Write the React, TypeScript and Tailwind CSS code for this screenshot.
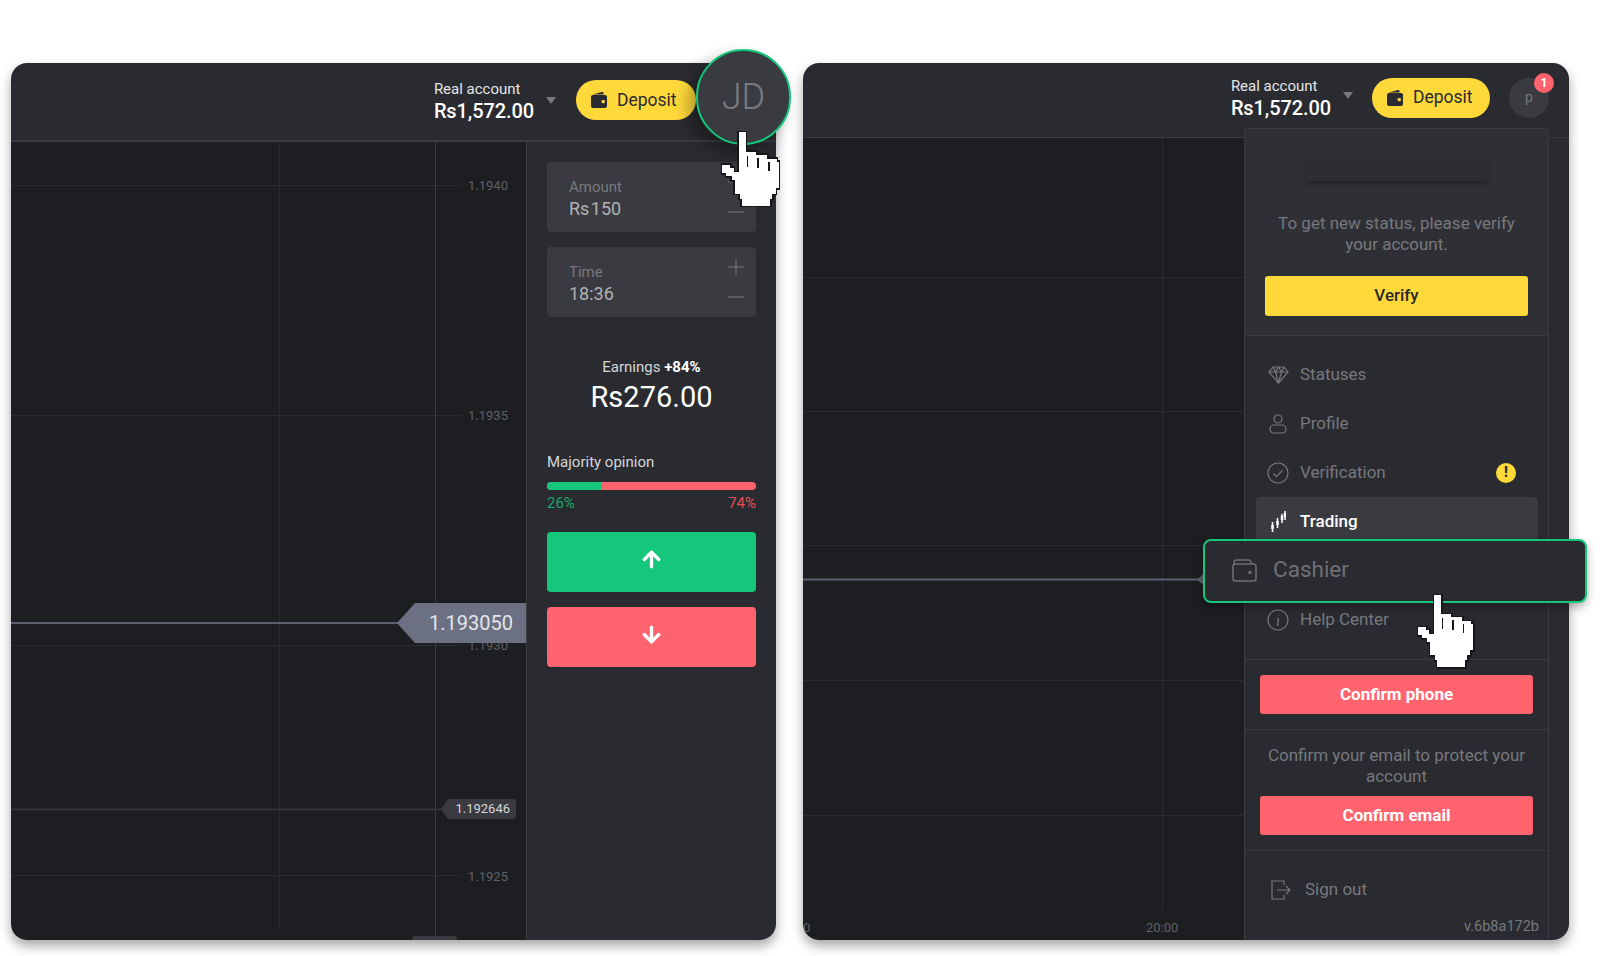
import { ArrowDown, ArrowUp } from "lucide-react";

const font = { fontFamily: "Roboto, sans-serif" };

function WalletFilled() {
  return (
    <svg width="19" height="18" viewBox="0 0 18 18" fill="#2a2b30">
      <path d="M2 3.500 11.500 1c.8-.2 1.500.3 1.500 1.200V3.500H2Z" />
      <path fillRule="evenodd" d="M2.500 4h12A2 2 0 0 1 16.500 6v9a2 2 0 0 1-2 2h-12a2 2 0 0 1-2-2V6a2 2 0 0 1 2-2Zm10 5a1.600 1.600 0 0 0 0 3.200h1.700V9h-1.700Z" />
    </svg>
  );
}

function Caret() {
  return (
    <svg width="10" height="7" viewBox="0 0 10 7" fill="#77787d">
      <path d="M0 0h10L5 7Z" />
    </svg>
  );
}

function PlusMark() {
  return (
    <svg width="16" height="16" viewBox="0 0 16 16" stroke="#7a7b80" strokeWidth="1">
      <path d="M8 0v16M0 8h16" />
    </svg>
  );
}

function MinusMark() {
  return (
    <svg width="16" height="16" viewBox="0 0 16 16" stroke="#7a7b80" strokeWidth="1">
      <path d="M0 8h16" />
    </svg>
  );
}

// pixel style hand pointer, drawn on a 75x85 box
function HandCursor({ className }: { className: string }) {
  const hand =
    "24,5 31,5 31,24 41,24 41,27 52,27 52,31 61,31 61,34 63,34 63,60 60,60 60,65 57,65 57,70 55,70 55,77 27,77 27,70 25,70 25,65 20,65 20,52 17,52 17,48 12,48 12,45 8,45 8,37 16,37 16,40 19,40 19,44 24,44";
  return (
    <svg className={className} viewBox="0 0 75 85" shapeRendering="crispEdges">
      <polygon points={hand} fill="#fff" stroke="#15161a" strokeWidth="3" />
      <polygon points={hand} fill="#fff" />
      <path d="M32.500 28v11M43 30v10M53.500 34v9" stroke="#15161a" strokeWidth="1.500" />
    </svg>
  );
}

function Field({ label, value }: { label: string; value: string }) {
  return (
    <div className="flex h-[70px] justify-between rounded-[4px] bg-[#3a3b40] pl-[22px] pr-[12px]">
      <div className="pt-[16px]">
        <div className="text-[15px] leading-[18px] text-[#77787d]">{label}</div>
        <div className="text-[18px] leading-[25px] text-[#b0b1b5] [word-spacing:-3px]">{value}</div>
      </div>
      <div className="flex flex-col gap-[14px] pt-[12px]">
        <PlusMark />
        <MinusMark />
      </div>
    </div>
  );
}

function AxisLabel({ top, children }: { top: string; children: string }) {
  return (
    <span className={`absolute left-[457px] text-[13px] leading-[14px] text-[#5f6065] ${top}`}>
      {children}
    </span>
  );
}

function LeftChart() {
  return (
    <div className="relative flex-1 bg-[#1d1e22]">
      <svg className="absolute inset-0 h-full w-full" fill="none">
        <g stroke="#2a2b30" strokeWidth="1">
          <path d="M0 43.500h451M0 273.500h451M0 503.500h451M0 733.500h451" />
          <path d="M268.500 0v786" />
        </g>
        <path d="M424.500 0v799" stroke="#3a3b40" />
        <path d="M0 667.500h430" stroke="#34353a" strokeWidth="2" />
        <path d="M0 481h390" stroke="#5c6070" strokeWidth="2" />
      </svg>
      <AxisLabel top="top-[37px]">1.1940</AxisLabel>
      <AxisLabel top="top-[267px]">1.1935</AxisLabel>
      <AxisLabel top="top-[497px]">1.1930</AxisLabel>
      <AxisLabel top="top-[728px]">1.1925</AxisLabel>
      <div className="absolute left-[386px] top-[461px] flex h-[40px] w-[129px] items-center justify-end bg-[#6b7183] pr-[13px] text-[20px] text-[#e4e5e9] [clip-path:polygon(0_50%,18px_0,100%_0,100%_100%,18px_100%)]">
        1.193050
      </div>
      <div className="absolute left-[430px] top-[657px] flex h-[20px] w-[75px] items-center justify-end rounded-r-[3px] bg-[#3a3b40] pr-[6px] text-[13px] text-[#d5d6da] [clip-path:polygon(0_50%,7px_0,100%_0,100%_100%,7px_100%)]">
        1.192646
      </div>
      <div className="absolute bottom-0 left-[401px] h-[4px] w-[45px] rounded-t-[3px] bg-[#3a3b40]" />
    </div>
  );
}

function LeftSidebar() {
  return (
    <aside className="flex w-[250px] flex-col border-l border-[#3a3b40] bg-[#2a2b30] px-[20px] pt-[20px]">
      <Field label="Amount" value="Rs 150" />
      <div className="mt-[15px]">
        <Field label="Time" value="18:36" />
      </div>
      <div className="mt-[40px] text-center text-[15px] leading-[20px] text-[#d5d6da]">
        Earnings <span className="font-bold text-white">+84%</span>
      </div>
      <div className="mt-[2px] text-center text-[29px] leading-[36px] text-white">Rs276.00</div>
      <div className="mt-[37px] text-[15px] leading-[20px] text-[#d5d6da]">Majority opinion</div>
      <div className="mt-[10px] flex h-[8px] overflow-hidden rounded-[4px] bg-[#ff636e]">
        <div className="w-[55px] bg-[#14c77b]" />
      </div>
      <div className="mt-[4px] flex justify-between text-[15px] leading-[18px]">
        <span className="text-[#14a96a]">26%</span>
        <span className="text-[#e0525c]">74%</span>
      </div>
      <button className="mt-[20px] flex h-[60px] items-center justify-center rounded-[4px] bg-[#14c77b] pb-[5px] text-white">
        <ArrowUp size={25} strokeWidth={3.2} />
      </button>
      <button className="mt-[15px] flex h-[60px] items-center justify-center rounded-[4px] bg-[#ff636e] pb-[5px] text-white">
        <ArrowDown size={25} strokeWidth={3.2} />
      </button>
    </aside>
  );
}

function AccountBlock({ gap, caretTop }: { gap: string; caretTop: string }) {
  return (
    <div className={`flex items-start pt-[2px] ${gap}`}>
      <div>
        <div className="text-[15px] leading-[19px] text-[#e4e5e9]">Real account</div>
        <div className="text-[20px] font-medium leading-[24px] tracking-[-0.1px] text-white">Rs1,572.00</div>
      </div>
      <div className={caretTop}>
        <Caret />
      </div>
    </div>
  );
}

function DepositButton({ width }: { width: string }) {
  return (
    <button className={`flex h-[40px] items-center gap-[8px] rounded-full bg-[#ffd93a] pl-[14px] text-[17.5px] text-[#2a2b30] ${width}`}>
      <WalletFilled />
      Deposit
    </button>
  );
}

function LeftCard() {
  return (
    <div className="relative h-[877px] w-[765px]">
      <div className="flex h-full flex-col overflow-hidden rounded-[16px] shadow-[0_6px_12px_rgba(0,0,0,0.35)]">
        <header className="flex h-[79px] shrink-0 items-center justify-end gap-[20px] border-b-2 border-[#3a3b40] bg-[#2a2b30] pb-[3px] pr-[80px]">
          <AccountBlock gap="gap-[12px]" caretTop="pt-[17px]" />
          <DepositButton width="w-[120px]" />
        </header>
        <div className="flex min-h-0 flex-1">
          <LeftChart />
          <LeftSidebar />
        </div>
      </div>
      <div className="absolute left-[685px] top-[-14px] flex h-[96px] w-[95px] items-center justify-center rounded-full border-2 border-[#14c77b] bg-[#3a3b40] text-[36px] font-light text-[#7a7b82] shadow-[-8px_8px_16px_rgba(0,0,0,0.3)]">
        JD
      </div>
      <HandCursor className="absolute left-[703px] top-[64px] h-[87px] w-[77px]" />
    </div>
  );
}

function IconBox({ children }: { children: React.ReactNode }) {
  return <span className="flex w-[22px] shrink-0 justify-center">{children}</span>;
}

const line = { fill: "none", stroke: "#77787d", strokeWidth: 1.2 };

function NavRow({ icon, label, active, badge }: { icon: React.ReactNode; label: string; active?: boolean; badge?: boolean }) {
  return (
    <div
      className={`flex h-[49px] items-center gap-[11px] rounded-[4px] pl-[11px] pr-[22px] text-[17px] ${
        active ? "bg-[#3a3b40] font-medium text-white" : "text-[#77787d]"
      }`}
    >
      <IconBox>{icon}</IconBox>
      <span className="flex-1">{label}</span>
      {badge && (
        <span className="flex h-[20px] w-[20px] items-center justify-center rounded-full bg-[#ffd93a] text-[14px] font-black text-[#2a2b30]">
          !
        </span>
      )}
    </div>
  );
}

function Menu() {
  return (
    <div className="absolute bottom-0 left-[441px] right-[20px] top-[65px] rounded-t-[4px] border-x border-t border-[#3a3b40] bg-[#2a2b30]">
      <section className="h-[207px] rounded-t-[4px] border-b border-[#3a3b40] bg-[#2f3035] px-[20px] pt-[29px]">
        <div className="mx-auto h-[23px] w-[181px] bg-[#2d2e33] shadow-[0_3px_4px_rgba(0,0,0,0.25)]" />
        <p className="mt-[32px] text-center text-[17px] leading-[21px] text-[#77787d]">
          To get new status, please verify your account.
        </p>
        <button className="mt-[21px] h-[40px] w-full rounded-[3px] bg-[#ffd93a] text-[17px] font-medium text-[#2a2b30]">
          Verify
        </button>
      </section>
      <section className="h-[324px] border-b border-[#3a3b40] pl-[11px] pr-[10px] pt-[14px]">
        <NavRow
          label="Statuses"
          icon={
            <svg width="21" height="18" viewBox="0 0 21 18" {...line}>
              <path d="M5 1h11l4 5-9.500 11L1 6Z" />
              <path d="M1 6h19M7.500 6l3 11 3-11M5 1l2.500 5L10.500 1l3 5L16 1" />
            </svg>
          }
        />
        <NavRow
          label="Profile"
          icon={
            <svg width="18" height="20" viewBox="0 0 18 20" {...line}>
              <circle cx="9" cy="5" r="4" />
              <path d="M5.500 11h7c2.500 0 4.500 1.800 4.500 4s-1.500 4-3.500 4h-9C2.500 19 1 17.200 1 15s2-4 4.500-4Z" />
            </svg>
          }
        />
        <NavRow
          badge
          label="Verification"
          icon={
            <svg width="22" height="22" viewBox="0 0 22 22" {...line}>
              <circle cx="11" cy="11" r="10" />
              <path d="m6.500 11.500 3 3 6-6" />
            </svg>
          }
        />
        <NavRow
          active
          label="Trading"
          icon={
            <svg width="15" height="21" viewBox="0 0 15 21" fill="none" stroke="#fff" strokeWidth="1.500">
              <path d="M1.500 11v10M6.500 7v10M11 3v9M14 0v9" />
              <path d="M1.500 14v4M6.500 10v4M11 5v4M14 2v4" strokeWidth="2.500" />
            </svg>
          }
        />
        <div className="h-[49px]" />
        <NavRow
          label="Help Center"
          icon={
            <svg width="22" height="22" viewBox="0 0 22 22" {...line}>
              <circle cx="11" cy="11" r="10" />
              <path d="M11.500 6.500v.5M10 10h1.500l-1 6h1.500" />
            </svg>
          }
        />
      </section>
      <section className="h-[70px] border-b border-[#3a3b40] px-[15px] pt-[15px]">
        <button className="h-[39px] w-full rounded-[3px] bg-[#ff636e] text-[17px] font-bold text-white">
          Confirm phone
        </button>
      </section>
      <section className="h-[121px] border-b border-[#3a3b40] px-[15px] pt-[15px]">
        <p className="text-center text-[17px] leading-[21px] text-[#77787d]">
          Confirm your email to protect your account
        </p>
        <button className="mt-[9px] h-[39px] w-full rounded-[3px] bg-[#ff636e] text-[17px] font-bold text-white">
          Confirm email
        </button>
      </section>
      <section className="pr-[9px] pt-[27px]">
        <div className="flex h-[24px] items-center gap-[14px] pl-[26px] text-[17px] text-[#77787d]">
          <svg width="20" height="20" viewBox="0 0 20 20" {...line}>
            <path d="M13 5V1H1v18h12v-4M6 10h13M15 6l4 4-4 4" />
          </svg>
          Sign out
        </div>
        <div className="mt-[16px] text-right text-[14.5px] leading-[18px] text-[#77787d]">v.6b8a172b</div>
      </section>
    </div>
  );
}

function RightCard() {
  return (
    <div className="relative h-[877px] w-[766px]">
      <div className="flex h-full flex-col overflow-hidden rounded-[16px] shadow-[0_6px_12px_rgba(0,0,0,0.35)]">
        <header className="flex h-[75px] shrink-0 items-center justify-end gap-[19px] border-b border-[#3a3b40] bg-[#2a2b30] pb-[5px] pr-[20px]">
          <AccountBlock gap="gap-[12px]" caretTop="pt-[15px]" />
          <DepositButton width="w-[118px]" />
          <div className="flex h-[40px] w-[40px] items-center justify-center rounded-full bg-[#3a3b40] text-[14px] text-[#77787d]">
            p
          </div>
        </header>
        <div className="flex min-h-0 flex-1">
          <div className="relative flex-1 bg-[#1d1e22]">
            <svg className="absolute inset-0 h-full w-full" fill="none">
              <g stroke="#2a2b30" strokeWidth="1">
                <path d="M0 139.500h441M0 273.500h441M0 407.500h441M0 542.500h441M0 677.500h441" />
                <path d="M359.500 0v771" />
              </g>
              <path d="M0 441.500h395" stroke="#5c6070" strokeWidth="2" />
              <path d="M394 441.500l8-7v14Z" fill="#5c6070" />
            </svg>
            <span className="absolute bottom-[5px] left-0 text-[13px] leading-[14px] text-[#5f6065]">0</span>
            <span className="absolute bottom-[5px] left-[343px] text-[13px] leading-[14px] text-[#5f6065]">20:00</span>
          </div>
          <aside className="w-[325px] bg-[#2a2b30]" />
        </div>
      </div>
      <Menu />
      <span className="absolute left-[731px] top-[10px] flex h-[20px] w-[20px] items-center justify-center rounded-full bg-[#ff636e] text-[12px] font-bold text-white">
        1
      </span>
      <div className="absolute left-[400px] top-[476px] flex h-[64px] w-[384px] items-center gap-[16px] rounded-[8px] border-2 border-[#14c77b] bg-[#2a2b30] pb-[2px] pl-[27px] text-[22.5px] text-[#6f7076] shadow-[0_4px_10px_rgba(0,0,0,0.3)]">
        <svg width="25" height="23" viewBox="0 0 25 23" fill="none" stroke="#6f7076" strokeWidth="1.500">
          <path d="M2 6V3.500A2.500 2.500 0 0 1 4.500 1h12A2.500 2.500 0 0 1 19 3.500V5" />
          <rect x="1" y="5" width="23" height="17" rx="2.500" />
          <circle cx="18" cy="13.500" r="1" fill="#6f7076" />
        </svg>
        Cashier
      </div>
      <HandCursor className="absolute left-[607px] top-[527px] h-[85px] w-[75px]" />
    </div>
  );
}

export default function App() {
  return (
    <div className="flex h-[956px] w-[1600px] gap-[27px] overflow-hidden bg-white pl-[11px] pt-[63px]" style={font}>
      <LeftCard />
      <RightCard />
    </div>
  );
}
